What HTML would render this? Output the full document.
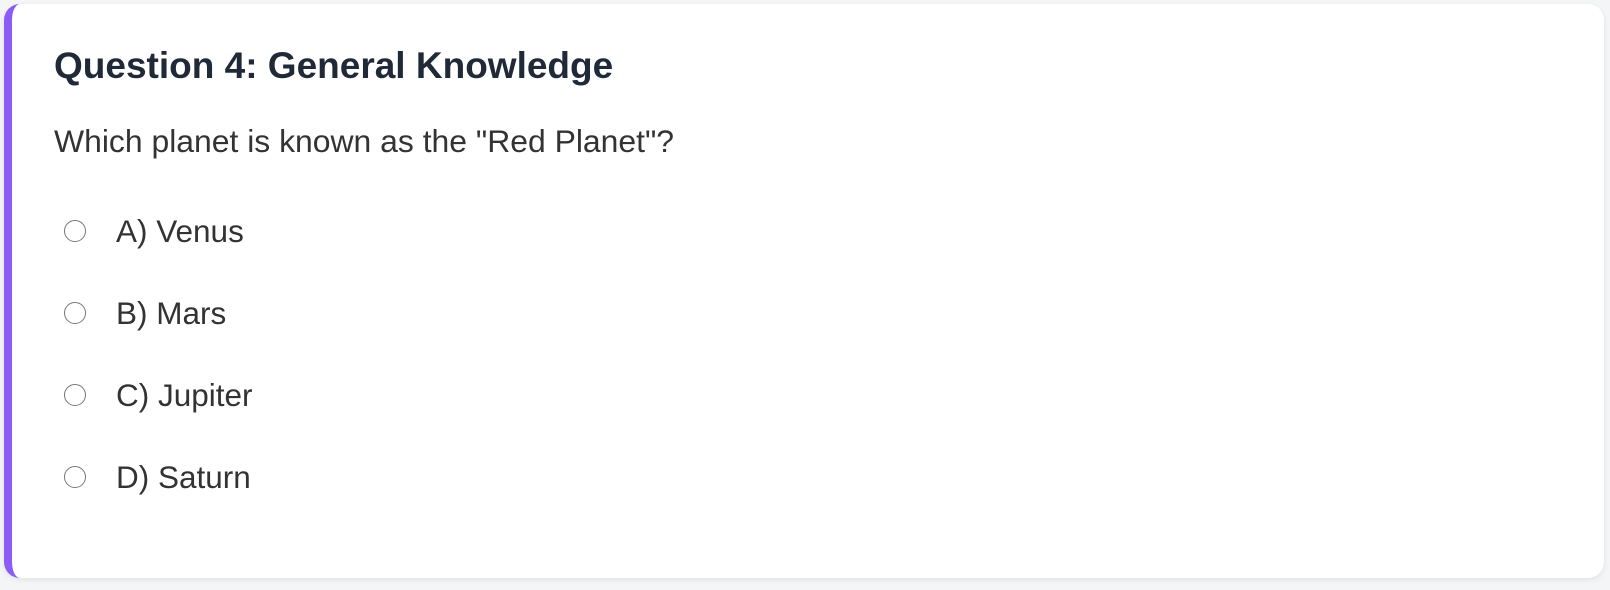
<!DOCTYPE html>
<html><head><style>
html,body{margin:0;padding:0;width:1610px;height:590px;background:#f4f5f7;overflow:hidden}
.card{position:absolute;left:4px;top:4px;width:1592px;height:574px;background:#fff;border-left:8px solid #8b5cf6;border-radius:16px;box-shadow:0 2px 6px rgba(0,0,0,0.08);font-family:"Liberation Sans",Arial,sans-serif}
h2{position:absolute;left:42px;top:40px;margin:0;font-size:37px;font-weight:bold;color:#1f2937;line-height:44px;white-space:nowrap}
.q{position:absolute;left:42px;top:118px;font-size:31.9px;color:#333;line-height:38px;white-space:nowrap}
.opt{position:absolute;left:52px;height:38px;display:flex;align-items:center;font-size:31.5px;color:#333;white-space:nowrap}
.r{width:22px;height:22px;border:1.5px solid #767676;border-radius:50%;box-sizing:border-box;margin-right:30px}
</style></head><body>
<div class="card">
<h2>Question 4: General Knowledge</h2>
<div class="q">Which planet is known as the "Red Planet"?</div>
<div class="opt" style="top:208px"><span class="r"></span>A) Venus</div>
<div class="opt" style="top:290px"><span class="r"></span>B) Mars</div>
<div class="opt" style="top:372px"><span class="r"></span>C) Jupiter</div>
<div class="opt" style="top:454px"><span class="r"></span>D) Saturn</div>
</div>
</body></html>
